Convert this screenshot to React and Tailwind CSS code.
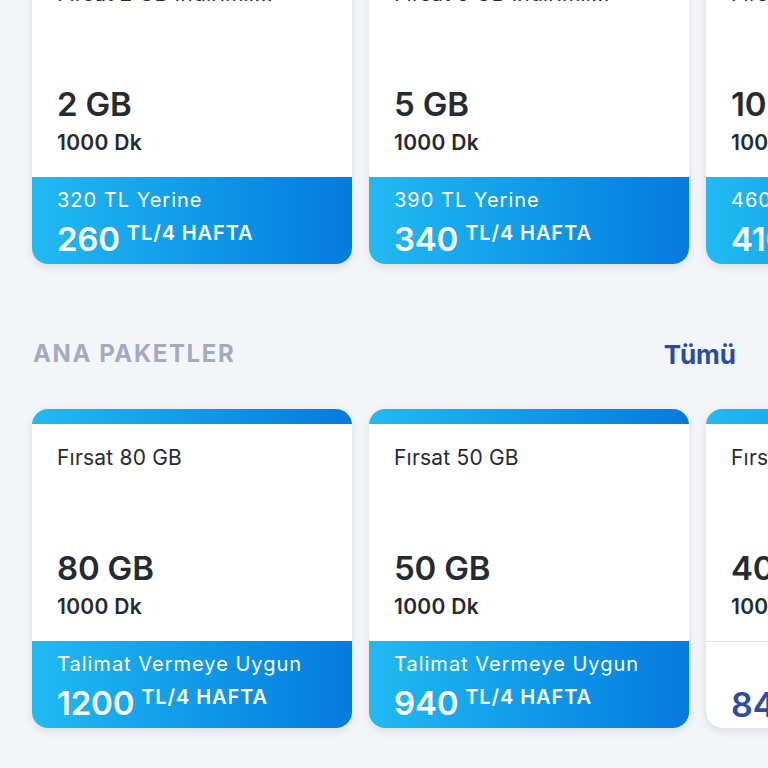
import React from "react";

const font = { fontFamily: "Inter, 'Noto Sans', sans-serif" };

function Card({ title, gb, dk, label, price, plain }) {
  return (
    <div className="w-[320px] shrink-0 rounded-[16px] overflow-hidden bg-gradient-to-r from-[#22baf3] to-[#067ade] pt-[15px] shadow-[0_3px_8px_rgba(30,50,90,0.12)]">
      <div className="bg-white h-[217px] flex flex-col justify-between px-[25px] pt-[19px] pb-[20px]">
        <div className="text-[21px] leading-[30px] text-[#262b33] whitespace-nowrap overflow-hidden text-ellipsis tracking-[0.2px]">{title}</div>
        <div className="flex flex-col">
          <div className="text-[33px] leading-[40px] font-semibold text-[#262b33] tracking-[-0.2px]">{gb}</div>
          <div className="text-[21px] leading-[28px] font-semibold text-[#262b33] mt-[5px] tracking-[0.3px]">{dk}</div>
        </div>
      </div>
      {plain ? (
        <div className="bg-white h-[87px] border-t border-[#e3e6ec] px-[25px] pt-[46px]">
          <div className="flex items-start">
            <span className="text-[34px] leading-[34px] font-semibold text-[#2b4ea3]">{price}</span>
            <span className="text-[20px] leading-[20px] font-semibold text-[#2b4ea3] ml-[8px] tracking-[0.8px]">TL/4 HAFTA</span>
          </div>
        </div>
      ) : (
        <div className="h-[87px] px-[25px] pt-[10px] text-white">
          <div className="text-[20px] leading-[26px] tracking-[1px]">{label}</div>
          <div className="flex items-start mt-[9px]">
            <span className="text-[33px] leading-[34px] font-semibold tracking-[-0.2px]">{price}</span>
            <span className="text-[20px] leading-[20px] font-semibold ml-[7px] mt-[1px] tracking-[0.9px]">TL/4 HAFTA</span>
          </div>
        </div>
      )}
    </div>
  );
}

export default function App() {
  return (
    <div className="w-[768px] h-[768px] overflow-hidden bg-[#f4f5f8]" style={font}>
      <div className="mt-[-55px] flex gap-[17px] pl-[32px]">
        <Card title="Fırsat 2 GB İndirimli..." gb="2 GB" dk="1000 Dk" label="320 TL Yerine" price="260" />
        <Card title="Fırsat 5 GB İndirimli..." gb="5 GB" dk="1000 Dk" label="390 TL Yerine" price="340" />
        <Card title="Fırsat 10 GB İndirimli..." gb="10 GB" dk="1000 Dk" label="460 TL Yerine" price="410" />
      </div>
      <div className="mt-[70px] h-[40px] flex items-center justify-between pl-[33px] pr-[32px]">
        <div className="text-[24px] font-bold tracking-[1.6px] text-[#a4abbe]">ANA PAKETLER</div>
        <div className="text-[26px] font-bold text-[#2c4c9f]">Tümü</div>
      </div>
      <div className="mt-[35px] flex gap-[17px] pl-[32px]">
        <Card title="Fırsat 80 GB" gb="80 GB" dk="1000 Dk" label="Talimat Vermeye Uygun" price="1200" />
        <Card title="Fırsat 50 GB" gb="50 GB" dk="1000 Dk" label="Talimat Vermeye Uygun" price="940" />
        <Card title="Fırsat 40 GB" gb="40 GB" dk="1000 Dk" price="840" plain />
      </div>
    </div>
  );
}
